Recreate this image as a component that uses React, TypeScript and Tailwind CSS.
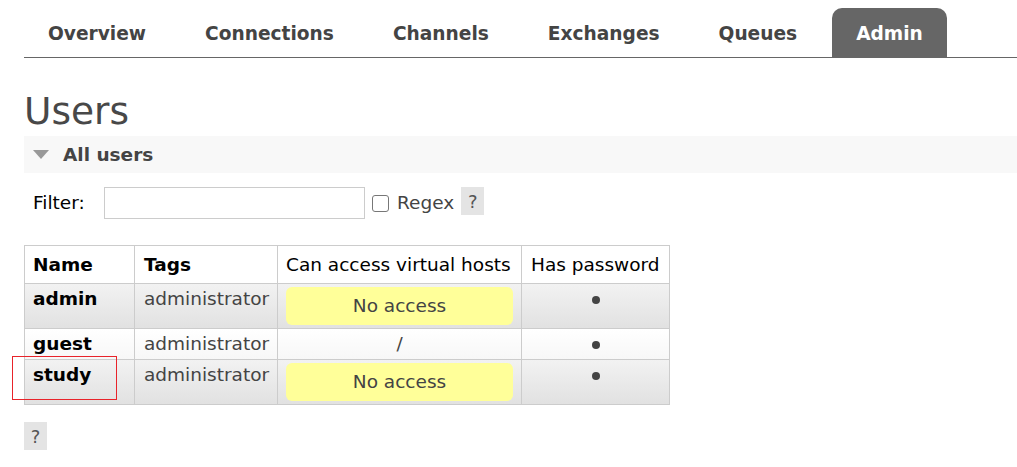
import React from "react";

const tabs = ["Overview", "Connections", "Channels", "Exchanges", "Queues", "Admin"];

interface User {
  name: string;
  tags: string;
  vhosts: string | null;
  alt: boolean;
}

const users: User[] = [
  { name: "admin", tags: "administrator", vhosts: null, alt: true },
  { name: "guest", tags: "administrator", vhosts: "/", alt: false },
  { name: "study", tags: "administrator", vhosts: null, alt: true },
];

function HelpBox({ className = "" }: { className?: string }) {
  return (
    <span
      className={`flex h-[28px] w-[23px] items-center justify-center bg-[#e4e4e4] text-[18px] text-[#555] ${className}`}
    >
      ?
    </span>
  );
}

export default function App() {
  return (
    <div
      className="min-h-[467px] w-[1017px] bg-white pl-6 text-[18.5px] text-[#444]"
      style={{ fontFamily: '"DejaVu Sans", Verdana, sans-serif' }}
    >
      {/* tab strip */}
      <div className="flex h-[58px] items-end border-b border-[#666] pt-2">
        {tabs.map((t) => (
          <div
            key={t}
            className={`mr-[11px] flex h-[49px] items-center rounded-t-[10px] px-6 pt-[3px] text-[18.6px] font-bold ${
              t === "Admin" ? "bg-[#666] text-white" : "text-[#444]"
            }`}
          >
            {t}
          </div>
        ))}
      </div>

      <h1 className="mt-[29px] h-[49px] text-[37.5px] leading-[48px] font-normal text-[#484848]">Users</h1>

      <div className="flex h-[37px] items-center bg-[#f8f8f8] pl-[9px]">
        <svg width="16" height="9" viewBox="0 0 16 9" className="mr-[14px]">
          <polygon points="0,0 16,0 8,9" fill="#999" />
        </svg>
        <span className="font-bold">All users</span>
      </div>

      <div className="mt-[14px] flex items-center pl-[9px]">
        <span className="w-[71px] text-black">Filter:</span>
        <div className="h-[32px] w-[261px] border border-[#ccc] bg-white" />
        <span className="ml-[7px] h-[17px] w-[17px] rounded-[3px] border border-[#777] bg-white" />
        <span className="ml-[8px] text-[#444]">Regex</span>
        <HelpBox className="ml-[7px] -mt-[4px]" />
      </div>

      <div className="relative mt-[26px] w-[645px]">
        <table className="w-[645px] table-fixed border-collapse text-left">
          <colgroup>
            <col className="w-[110px]" />
            <col className="w-[143px]" />
            <col className="w-[244px]" />
            <col className="w-[148px]" />
          </colgroup>
          <thead>
            <tr className="h-[38px] bg-white text-black">
              <th className="border border-[#ccc] px-[8px] font-bold">Name</th>
              <th className="border border-[#ccc] px-[9px] font-bold">Tags</th>
              <th className="border border-[#ccc] px-[8px] font-normal whitespace-nowrap">Can access virtual hosts</th>
              <th className="border border-[#ccc] px-[9px] font-normal whitespace-nowrap">Has password</th>
            </tr>
          </thead>
          <tbody>
            {users.map((u) => (
              <tr
                key={u.name}
                className={
                  u.alt
                    ? "bg-gradient-to-b from-[#f2f2f2] to-[#e1e1e1]"
                    : "bg-gradient-to-b from-white to-[#f7f7f7]"
                }
              >
                <td className="border border-[#ccc] px-[8px] pt-[3px] pb-[3px] align-top leading-[24px] font-bold text-black">
                  {u.name}
                </td>
                <td className="border border-[#ccc] px-[9px] pt-[3px] align-top leading-[24px] text-[#444]">
                  {u.tags}
                </td>
                <td className="border border-[#ccc] px-[8px] pt-[3px] pb-[3px] align-top">
                  {u.vhosts === null ? (
                    <div className="flex h-[38px] items-center justify-center rounded-[6px] bg-[#ffff99] text-[#444]">
                      No access
                    </div>
                  ) : (
                    <div className="text-center leading-[24px] text-[#444]">{u.vhosts}</div>
                  )}
                </td>
                <td className="border border-[#ccc] pt-[12px] align-top">
                  <div className="mx-auto h-[8px] w-[8px] rounded-full bg-[#444]" />
                </td>
              </tr>
            ))}
          </tbody>
        </table>
        {/* red highlight annotation */}
        <div className="pointer-events-none absolute top-[111px] left-[-12px] h-[44px] w-[105px] border-[1.5px] border-[#e8232a]" />
      </div>

      <HelpBox className="mt-[17px]" />
    </div>
  );
}
